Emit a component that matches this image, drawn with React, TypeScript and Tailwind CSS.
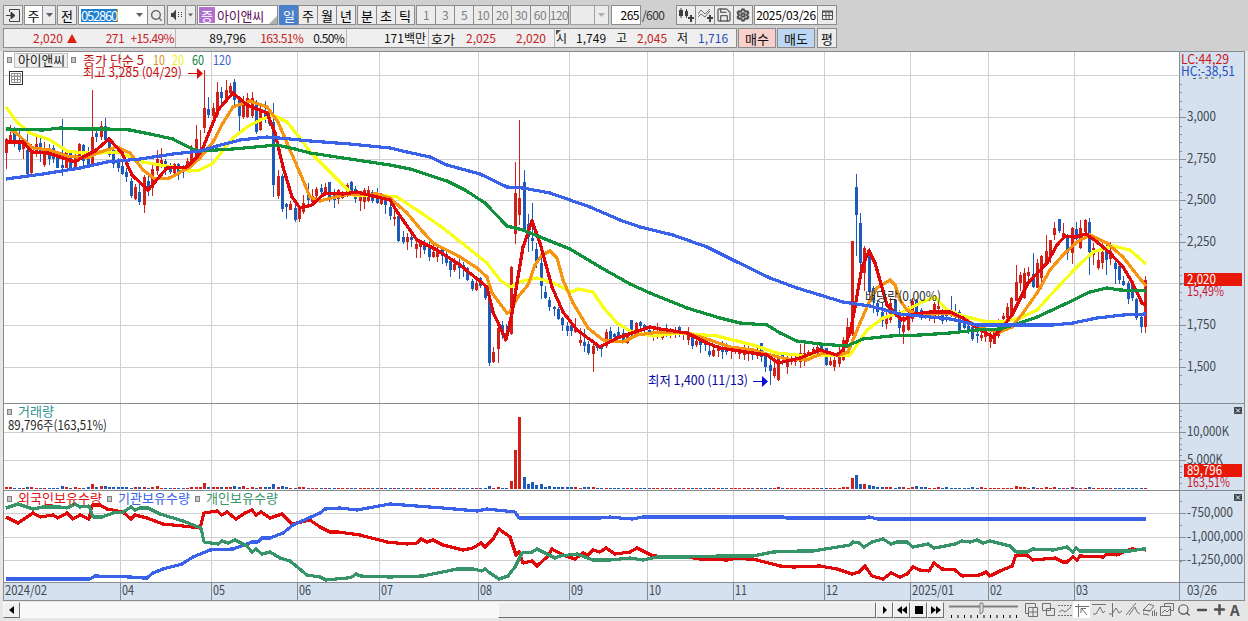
import React from "react";
import { Search, Settings, Save, Plus, Minus } from "lucide-react";

const RED = "#d02018";
const BLUE = "#1c5cb8";

// une bougie par entrée : couleur, haut, ouverture/clôture (haut, bas), bas
const CANDLES = `
r138 139 152 168,r125 135 142 142,b127 130 142 146,b130 141 149 151,r143 144 148 158,b134 150 173 173,r144 150 172 175,r136 144 153 156,b137 143 153 161,r142 149 164 166,
b144 148 158 164,b145 148 158 162,b151 151 167 167,b119 165 167 175,r150 152 167 167,b151 152 168 168,r154 156 166 167,r143 144 159 160,b144 145 160 166,b147 155 166 167,
r90 137 166 166,b129 133 136 141,r121 126 136 139,b118 126 139 141,b139 142 154 156,b147 150 163 167,b158 160 167 171,b160 166 173 174,b168 172 176 181,b178 181 195 197,
r184 187 198 199,b180 192 201 204,r175 177 204 212,b175 181 189 195,r165 169 187 195,r150 159 170 174,r148 160 165 167,b159 161 168 174,b163 168 171 173,r163 164 172 173,
b163 164 172 179,b165 166 168 177,r158 161 168 169,r145 150 166 167,r125 139 155 157,r130 150 154 156,r70 108 127 132,b97 109 114 117,r103 108 115 117,r82 92 114 116,
b87 92 97 105,r80 90 100 102,r83 86 92 97,b79 82 99 104,b96 100 115 132,r96 101 116 118,r93 98 116 117,r92 98 115 117,b100 102 131 133,r105 109 129 130,
b101 112 116 122,b112 114 123 125,b103 122 184 196,r170 176 195 198,b174 176 208 211,b203 204 206 218,r201 204 209 209,b205 208 219 221,r205 209 218 221,r195 203 211 213,
b183 195 199 203,r189 196 201 204,r187 189 195 197,b184 188 191 194,r183 187 193 195,b182 182 199 201,b189 192 199 207,r189 190 198 203,r191 193 197 198,r183 185 194 196,
b181 182 191 193,b186 189 198 202,r193 194 200 210,r188 190 201 208,r186 190 200 201,b190 192 200 202,b188 196 202 203,r193 199 203 204,b194 198 204 213,b203 207 215 219,
r209 217 218 225,b213 216 240 241,b231 237 241 243,r233 237 241 249,b233 237 239 246,r242 244 248 257,r241 243 246 257,b240 242 249 253,b241 246 256 260,r243 252 256 257,
r247 252 256 261,b246 247 255 263,b250 254 262 265,b259 261 269 276,r258 264 269 271,b259 263 267 278,b262 265 267 276,b267 268 279 280,b279 281 288 290,r281 283 289 290,
b277 278 285 287,b284 286 297 299,b299 300 362 365,r347 352 361 362,r325 328 348 362,b321 325 334 338,b324 333 338 340,r266 267 333 334,r162 193 233 243,r120 198 214 224,
b170 182 228 229,b214 224 236 251,b203 238 240 250,b243 249 260 267,b250 263 285 298,b286 292 297 298,b297 300 306 310,b306 307 308 315,b307 309 318 319,b317 318 324 330,
b322 326 330 335,b322 325 330 335,r318 329 331 332,r328 340 342 345,b329 342 345 351,b341 344 352 354,r343 346 353 371,b343 345 347 350,b344 345 348 356,r329 332 345 347,
b327 331 338 341,b333 334 336 342,b327 332 335 338,b327 333 341 342,r334 336 342 343,b320 320 332 337,r322 323 331 333,b321 322 325 329,b324 325 329 332,b327 330 334 334,
r327 331 335 340,r323 333 334 338,r332 333 337 339,b324 331 334 336,r328 331 334 337,r327 331 333 337,b326 327 334 336,r331 332 334 339,r327 334 339 344,b333 334 345 348,
r339 341 344 346,b338 341 344 352,b337 342 344 350,b345 351 354 356,r347 350 355 356,r341 348 350 356,b341 349 351 358,b343 347 351 354,r346 349 350 358,r347 348 350 353,
r348 351 353 358,r343 352 354 359,r342 351 353 360,b348 352 354 359,r345 352 355 358,b343 343 356 361,b353 355 366 371,b357 365 370 384,r362 368 375 377,r356 358 379 380,
b354 354 358 364,r352 358 366 373,r355 358 361 364,r356 359 361 365,r344 353 361 367,r343 353 355 365,r350 352 356 358,r347 349 352 355,r343 347 352 353,b343 345 348 353,
b348 348 364 365,r357 361 364 365,r356 360 366 370,r347 355 363 366,r337 340 359 360,r318 327 341 347,r241 241 333 335,b174 187 214 255,b213 223 262 265,r246 248 272 290,
b248 252 291 292,b286 288 299 312,b300 303 311 315,b303 312 320 326,r310 317 323 328,r298 303 319 322,b299 300 312 316,b310 316 327 333,r313 325 331 343,r306 316 329 330,
r298 301 318 321,b299 300 314 316,b308 310 314 319,b311 313 316 318,r310 313 315 320,r302 304 315 322,r299 306 308 315,b309 311 320 323,b313 314 315 321,b296 310 315 316,
b304 312 316 320,b310 312 329 333,b321 323 327 328,b324 326 329 333,b326 327 338 340,b332 334 335 342,r331 335 337 340,r332 333 336 341,r330 336 341 347,r330 332 343 343,
r319 321 335 337,r313 316 318 328,r303 307 317 319,r297 298 314 318,r265 282 300 300,r272 275 282 290,r268 273 297 298,r267 272 275 284,b253 274 286 287,r259 263 287 287,
r255 256 277 288,r235 251 262 265,r240 240 256 262,r222 228 234 239,b219 219 230 232,r223 233 235 238,b234 235 252 259,r227 228 252 263,b222 229 238 244,r220 228 247 248,
r219 220 231 232,b218 222 251 274,r243 248 254 264,r250 260 267 269,r243 252 262 268,b242 249 259 274,r242 251 258 264,b261 263 268 283,b265 266 279 283,b276 281 284 285,
b281 283 298 303,b281 283 297 300,b298 299 317 319,b316 317 326 332,r276 280 326 332`
  .trim()
  .split(",")
  .map((s) => {
    const t = s.trim();
    const [high, top, bottom, low] = t.slice(1).split(" ").map(Number);
    return { color: t[0] === "r" ? RED : BLUE, high, top, bottom, low };
  });

const xOf = (i: number) => Math.floor(6.1 + i * 4.316);

// hauteurs des barres de volume qui dépassent du fond
const VOLUMES: Record<number, number> = {
  0: 2, 1: 2, 5: 2, 6: 2, 13: 3, 14: 2, 16: 2, 19: 2, 20: 5, 21: 2, 22: 3, 23: 3, 24: 2, 25: 2, 26: 2, 27: 2, 28: 2,
  30: 2, 31: 2, 32: 2, 34: 2, 35: 3, 43: 2, 44: 2, 45: 2, 46: 6, 47: 2, 48: 2, 49: 2, 50: 2, 51: 2, 52: 2, 53: 3,
  54: 2, 55: 3, 57: 2, 59: 2, 60: 2, 61: 2, 62: 5, 63: 2, 64: 3, 65: 2, 68: 2, 69: 2, 112: 3, 114: 2, 117: 8, 118: 39,
  119: 72, 120: 12, 121: 5, 122: 7, 123: 4, 124: 5, 125: 2, 126: 3, 127: 2, 128: 2, 129: 2, 130: 2, 131: 2, 132: 2,
  134: 2, 135: 2, 136: 2, 179: 2, 194: 2, 195: 2, 196: 11, 197: 14, 198: 5, 199: 5, 200: 4, 201: 3, 202: 2, 203: 2,
  204: 2, 205: 2, 207: 2, 208: 2, 210: 2, 211: 3, 212: 2, 213: 2, 216: 2, 218: 2, 224: 2, 226: 2, 234: 3, 235: 2,
  236: 2, 238: 2, 241: 2, 243: 2, 247: 2, 251: 2,
};

const MA = [
  {
    color: "#f6ff14",
    points:
      "6,107 17,122 30,133 50,140 67,151 83,153 100,153 117,152 130,157 143,162 160,165 180,168 190,171 200,170 213,163 233,138 247,127 260,120 273,115 287,122 300,138 311,153 353,195 377,195 397,197 420,212 443,228 467,247 487,263 500,280 510,287 523,281 537,278 553,283 572,292 578,289 593,292 603,307 617,323 630,331 637,333 653,336 680,333 717,336 753,345 777,353 807,356 823,355 850,355 857,345 867,330 883,318 903,312 920,303 935,297 947,310 963,316 983,321 1003,322 1020,318 1037,310 1057,288 1077,267 1093,252 1113,246 1130,250 1146,264",
  },
  {
    color: "#f79410",
    points:
      "6,128 15,132 27,143 33,148 50,150 67,156 87,158 100,152 117,147 130,153 143,170 155,179 170,178 190,167 200,158 213,142 223,123 233,107 250,101 267,107 278,122 290,150 300,173 310,197 320,201 343,195 377,194 390,198 407,213 423,232 433,243 460,257 477,268 487,277 492,293 507,313 510,312 518,297 528,285 535,265 542,255 550,251 557,258 563,280 573,303 588,328 603,340 623,342 637,335 660,332 687,333 710,340 730,347 753,350 770,355 787,359 807,360 823,353 840,355 848,352 860,323 870,300 877,288 890,280 895,285 900,300 907,310 920,315 947,313 963,318 980,328 1000,332 1012,327 1023,313 1037,293 1050,270 1063,255 1077,242 1090,235 1107,243 1123,257 1137,275 1146,286",
  },
  {
    color: "#e00808",
    points:
      "6,142 23,142 32,152 48,153 63,158 75,162 83,157 95,151 109,139 122,153 132,175 148,190 167,168 187,167 197,157 202,150 213,123 218,110 233,93 247,105 267,113 275,133 283,167 292,197 300,208 312,205 325,193 343,194 357,192 377,197 390,200 398,213 417,240 437,250 460,265 487,287 493,312 506,340 512,313 523,247 532,221 540,243 552,287 563,312 577,330 600,347 617,338 632,333 650,327 660,329 687,333 707,343 720,348 753,353 767,355 778,363 800,358 820,350 837,355 843,350 850,333 855,307 862,267 869,251 875,263 887,305 902,320 915,314 930,312 950,312 963,318 977,328 993,337 1000,330 1012,315 1028,283 1047,263 1057,245 1065,236 1075,237 1086,234 1097,242 1110,253 1123,267 1132,282 1142,303 1146,305",
  },
  {
    color: "#12913c",
    points:
      "6,129 43,130 60,128 80,129 107,129 130,130 150,134 173,139 192,149 200,151 233,149 277,145 295,149 310,153 330,156 363,161 390,165 410,169 447,181 465,190 485,203 507,226 523,230 540,237 570,249 600,267 630,284 650,293 687,308 720,318 740,323 767,325 780,333 797,341 820,344 847,346 863,339 890,336 920,335 950,333 977,330 1000,329 1017,324 1037,317 1063,305 1090,292 1107,288 1120,290 1146,291",
  },
  {
    color: "#3a62e8",
    points:
      "6,179 43,174 80,168 107,162 140,159 173,154 200,151 217,146 240,140 267,137 290,139 310,141 350,144 390,148 407,152 430,157 447,165 480,174 507,187 523,188 550,193 590,207 620,220 640,227 673,235 707,247 737,262 770,278 797,288 843,302 870,306 900,314 930,317 950,319 977,325 1003,325 1030,325 1053,325 1073,323 1097,318 1123,315 1146,314",
  },
];

const HOLDINGS = [
  {
    color: "#e00808",
    points:
      "6,517 18,523 33,513 40,517 53,515 58,518 67,513 73,519 80,515 89,519 92,505 100,505 107,509 123,512 131,519 135,515 147,518 163,524 183,526 200,528 204,513 217,511 222,515 227,512 236,519 245,513 252,510 256,515 261,512 270,518 282,514 292,524 310,520 320,527 330,532 338,532 360,535 387,542 407,544 417,543 421,539 427,542 433,540 443,545 463,550 473,548 481,543 485,547 493,539 499,529 510,537 516,555 519,552 523,563 532,561 537,566 547,557 552,549 563,555 575,559 583,553 588,555 593,550 600,552 606,548 615,554 630,552 637,548 653,556 687,557 700,559 727,560 737,558 757,560 780,566 793,567 820,566 837,569 852,574 859,572 865,566 872,576 883,579 891,573 900,577 907,574 913,567 920,570 929,571 934,563 942,569 955,570 962,576 980,575 986,572 990,576 1000,571 1012,566 1016,555 1027,555 1033,560 1055,558 1063,562 1067,562 1073,557 1077,560 1080,556 1103,557 1107,554 1117,555 1123,552 1132,549 1146,550",
  },
  {
    color: "#3a62e8",
    points:
      "6,579 90,579 95,576 130,577 143,578 147,578 153,573 163,569 182,564 193,557 210,550 233,549 252,542 258,542 262,538 270,538 283,533 293,525 320,513 325,509 340,508 357,510 390,504 443,508 477,511 487,509 515,512 519,518 600,518 610,517 620,518 632,519 643,517 783,517 787,518 865,518 869,517 878,519 1146,519",
  },
  {
    color: "#379468",
    points:
      "6,508 18,504 33,509 43,507 60,507 67,508 75,504 80,507 89,506 93,517 102,517 113,513 123,512 131,507 135,510 140,508 148,508 160,514 183,521 201,528 204,542 218,544 222,541 228,543 235,540 247,546 252,552 256,549 262,554 270,552 280,558 290,561 307,575 320,577 326,580 347,578 352,577 356,574 360,576 390,577 423,576 457,569 473,569 482,571 485,569 490,573 499,579 508,576 515,567 522,553 532,552 537,549 547,554 555,558 560,556 577,554 593,560 610,560 630,558 643,560 657,557 687,557 720,556 753,556 773,552 800,551 813,551 850,545 853,542 859,543 864,547 872,542 883,539 891,544 897,542 907,542 913,547 928,544 934,548 940,547 955,544 962,541 970,542 977,540 983,543 990,541 1010,546 1016,552 1027,552 1033,549 1053,550 1067,547 1073,552 1076,548 1080,551 1130,551 1143,549 1146,549",
  },
];

const MONTHS: [number, string, number][] = [
  [120, "04", 12], [211, "05", 12], [297, "06", 12], [379, "07", 12], [478, "08", 12], [569, "09", 12],
  [647, "10", 12], [733, "11", 12], [824, "12", 12], [910, "2025/01", 42], [988, "02", 12], [1074, "03", 12],
];

const GRID_Y = [75, 117, 159, 200, 242, 283, 325, 367, 432, 460, 513, 537, 560];

interface LabelProps {
  x: number;
  y: number;
  w: number;
  color?: string;
  children: string;
}

function Label({ x, y, w, color = "#404850", children }: LabelProps) {
  return (
    <text x={x} y={y} textLength={w} lengthAdjust="spacingAndGlyphs" fill={color} className="text-[13px]">
      {children}
    </text>
  );
}

function Bullet({ x, y }: { x: number; y: number }) {
  return <rect x={x + 0.5} y={y + 0.5} width="4" height="5" fill="#c8c8c8" stroke="#808080" />;
}

function CloseBox({ y }: { y: number }) {
  return (
    <g>
      <rect x="1234" y={y} width="8" height="7" fill="#404850" />
      <path d={`M1236 ${y + 1.5}l4 4m0-4l-4 4`} stroke="#fff" />
    </g>
  );
}

function Chart() {
  return (
    <svg width="1242" height="550" viewBox="3 51 1242 550" className="block shrink-0 font-normal">
      <rect x="3" y="51" width="1242" height="550" fill="#fff" />
      <rect x="1180" y="51" width="65" height="550" fill="#d6e1ef" />
      <rect x="3" y="583" width="1242" height="17" fill="#d6e1ef" />
      <g shapeRendering="crispEdges">
        {GRID_Y.map((y) => (
          <rect key={y} x="4" y={y} width="1175" height="1" fill="#d0d0d0" />
        ))}
        {MONTHS.map(([x]) => (
          <g key={x}>
            <rect x={x} y="52" width="1" height="530" fill="#d0d0d0" />
            <rect x={x} y="583" width="1" height="17" fill="#808890" />
          </g>
        ))}
        {CANDLES.map((c, i) => (
          <g key={i} fill={c.color}>
            <rect x={xOf(i)} y={c.high} width="1" height={c.low - c.high + 1} />
            <rect x={xOf(i) - 1} y={c.top} width="3" height={c.bottom - c.top + 1} />
            <rect x={xOf(i) - 1} y={489 - (VOLUMES[i] || 1)} width="3" height={VOLUMES[i] || 1} />
          </g>
        ))}
        <path d="M899 317h9l-4 6z" fill="#e00808" />
        {MA.map((l) => (
          <polyline key={l.color} points={l.points} fill="none" stroke={l.color} strokeWidth="3.2" strokeLinejoin="round" />
        ))}
        {HOLDINGS.map((l) => (
          <polyline key={l.color} points={l.points} fill="none" stroke={l.color} strokeWidth="3.2" strokeLinejoin="round" />
        ))}
        {/* cadres des trois panneaux */}
        {[51, 403, 490, 582, 600].map((y) => (
          <rect key={y} x="3" y={y} width="1242" height="1" fill="#888c90" />
        ))}
        {[3, 1179, 1244].map((x) => (
          <rect key={x} x={x} y="51" width="1" height="550" fill="#888c90" />
        ))}
        {/* graduations */}
        {Array.from({ length: 37 }, (_, i) => (
          <rect key={i} x="1180" y={Math.round(84 + i * 8.32)} width="2" height="1" fill="#888c90" />
        ))}
        {Array.from({ length: 14 }, (_, i) => (
          <rect key={i} x="1180" y={Math.round(410 + i * 5.6)} width="2" height="1" fill="#888c90" />
        ))}
        {Array.from({ length: 6 }, (_, i) => (
          <rect key={i} x="1180" y={501 + i * 12} width="2" height="1" fill="#888c90" />
        ))}
        {GRID_Y.slice(1).map((y) => (
          <rect key={y} x="1180" y={y} width="6" height="1" fill="#888c90" />
        ))}
      </g>

      {["3,000", "2,750", "2,500", "2,250", "", "1,750", "1,500"].map(
        (t, i) => t && <Label key={t} x={1187} y={121 + i * 41.6} w={29}>{t}</Label>
      )}
      <path d="M1193 78.500h3m3-.5h3m3 0h3m3 0h3" stroke="#505860" />
      <Label x={1181} y={64} w={48} color="#c81818">LC:44,29</Label>
      <Label x={1181} y={76} w={54} color="#2050c0">HC:-38,51</Label>
      <rect x="1184" y="273" width="58" height="13" fill="#e81808" />
      <Label x={1187} y={284} w={29} color="#fff">2,020</Label>
      <Label x={1187} y={296} w={37} color="#c81830">15,49%</Label>
      <Label x={1187} y={436} w={42}>10,000K</Label>
      <Label x={1187} y={464} w={36}>5,000K</Label>
      <rect x="1184" y="464" width="58" height="13" fill="#e81808" />
      <Label x={1187} y={475} w={35} color="#fff">89,796</Label>
      <Label x={1187} y={487} w={43} color="#c81830">163,51%</Label>
      <Label x={1187} y={517} w={46}>-750,000</Label>
      <Label x={1187} y={541} w={56}>-1,000,000</Label>
      <Label x={1187} y={564} w={56}>-1,250,000</Label>
      <CloseBox y={407} />
      <CloseBox y={494} />

      <Label x={5} y={595} w={42}>2024/02</Label>
      {MONTHS.map(([x, t, w]) => (
        <Label key={x} x={x + 2} y={595} w={w}>{t}</Label>
      ))}
      <Label x={1187} y={595} w={30}>03/26</Label>

      <Bullet x={7} y={57} />
      <rect x="14.5" y="53.5" width="53" height="14" fill="#eee" stroke="#c0c0c0" />
      <Label x={18} y={65} w={47} color="#202020">아이앤씨</Label>
      <Bullet x={71} y={57} />
      <Label x={83} y={65} w={61} color="#c01010">종가 단순 5</Label>
      <Label x={153} y={65} w={12} color="#e09020">10</Label>
      <Label x={172} y={65} w={12} color="#f0f020">20</Label>
      <Label x={192} y={65} w={12} color="#108040">60</Label>
      <Label x={213} y={65} w={18} color="#3860c8">120</Label>
      <Label x={83} y={77} w={99} color="#c81010">최고 3,285 (04/29)</Label>
      <path d="M188 73.5h10" stroke="#e00808" />
      <path d="M197 68l6 5.5-6 5.5z" fill="#e00808" />
      <g fill="none" stroke="#303030">
        <rect x="9.5" y="71.5" width="13" height="13" />
        <path d="M11.5 73.500h9v9h-9zm0 3h9m-9 3h9m-6-6v9m3-9v9" stroke="#909090" />
      </g>
      <Label x={648} y={385} w={100} color="#0808a0">최저 1,400 (11/13)</Label>
      <path d="M753 381.500h9" stroke="#0808d0" />
      <path d="M762 376l6 5.500-6 5.500z" fill="#0808e0" />
      <Label x={865} y={301} w={76} color="#303030">배당락(0,00%)</Label>

      <Bullet x={7} y={409} />
      <Label x={18} y={416} w={36} color="#309090">거래량</Label>
      <Label x={8} y={430} w={99} color="#282828">89,796주(163,51%)</Label>
      <Bullet x={7} y={496} />
      <Label x={18} y={503} w={84} color="#e01010">외국인보유수량</Label>
      <Bullet x={107} y={496} />
      <Label x={118} y={503} w={72} color="#3a62e8">기관보유수량</Label>
      <Bullet x={195} y={496} />
      <Label x={206} y={503} w={72} color="#379468">개인보유수량</Label>
    </svg>
  );
}

interface CellProps {
  className?: string;
  bg?: string;
  border?: string;
  children?: React.ReactNode;
}

function Cell({ className = "", bg = "bg-[#ececec]", border = "border-[#8c8c8c]", children }: CellProps) {
  return (
    <div className={`h-5 shrink-0 border flex items-center justify-center text-[13px] leading-none ${bg} ${border} ${className}`}>
      {children}
    </div>
  );
}

function Arrow({ className = "text-[#606060]" }: { className?: string }) {
  return (
    <svg width="7" height="4" viewBox="0 0 7 4" className={`shrink-0 ${className}`}>
      <path d="M0 0h7L3.500 4z" fill="currentColor" />
    </svg>
  );
}

function Toolbar() {
  return (
    <div className="flex items-center h-5 pl-[3px]">
      <Cell className="w-5 mr-px">
        <svg width="14" height="13" fill="none" stroke="#404040">
          <path d="M3.500 3V.5h10v12h-10V10" />
          <path d="M0 6.500h5" />
          <path d="M5 3l4 3.500L5 10z" fill="#303030" />
        </svg>
      </Cell>
      <Cell bg="bg-white" className="w-[18px] border-r-0">주</Cell>
      <Cell className="w-[14px] mr-px"><Arrow /></Cell>
      <Cell className="w-5 mr-px">전</Cell>
      <Cell bg="bg-white" className="w-[54px] border-r-0 !justify-start pl-[2px]">
        <span className="bg-[#1c80d0] text-white text-[13px] leading-[13px] w-[37px] border-r border-orange-400">
          <span className="block w-[36px] tracking-[-1.200px]">052860</span>
        </span>
      </Cell>
      <Cell bg="bg-white" className="w-4 border-l-0"><Arrow /></Cell>
      <Cell className="w-[18px] mr-[2px] -ml-px"><Search size={13} color="#606060" strokeWidth={2.5} /></Cell>
      <Cell className="w-[18px] border-r-0">
        <svg width="13" height="12">
          <path d="M1 4h2l3-3.500v11L3 8H1z" fill="#404040" />
          <path d="M8 3h1v1H8zM8 5h1v1H8zM8 7h1v1H8zM11 3h1v1h-1zM11 5h1v1h-1zM11 7h1v1h-1z" fill="#404040" />
        </svg>
      </Cell>
      <Cell className="w-[11px] mr-px"><Arrow className="text-[#606060] w-[5px]" /></Cell>
      <Cell bg="bg-white" className="relative w-[81px] mr-px !justify-start">
        <span className="bg-[#b070cc] text-white w-4 h-4 ml-px flex items-center justify-center shrink-0">증</span>
        <span className="text-[#601058] text-[13px] ml-[2px] tracking-[-0.200px]">아이앤씨</span>
        <svg width="8" height="8" className="absolute right-0 bottom-0"><path d="M8 0v8H0z" fill="#b0b0b0" /></svg>
      </Cell>
      <Cell bg="bg-[#4a80c8]" border="border-[#4a80c8]" className="w-5 text-white">일</Cell>
      {["주", "월", "년"].map((t) => (
        <Cell key={t} className="w-5 -ml-px">{t}</Cell>
      ))}
      <div className="w-px" />
      {["분", "초", "틱"].map((t) => (
        <Cell key={t} className="w-5 -mr-px">{t}</Cell>
      ))}
      <div className="w-[2px]" />
      {["1", "3", "5", "10", "20", "30", "60", "120"].map((t) => (
        <Cell key={t} className="w-5 -mr-px text-[#808080] !text-[12px]">
          <span className="tracking-[-0.500px]">{t}</span>
        </Cell>
      ))}
      <Cell border="border-[#a0a0a0]" className="w-[25px] ml-[2px]" />
      <Cell border="border-[#a0a0a0]" className="w-[15px] -ml-px mr-[2px]"><Arrow className="text-[#b0b0b0]" /></Cell>
      <Cell bg="bg-white" className="w-[30px] !text-[12px] !justify-end pr-px">
        <span className="tracking-[-0.500px]">265</span>
      </Cell>
      <span className="w-[35px] text-[12px] leading-none pl-px tracking-[-0.600px] text-[#303030] shrink-0">/600</span>
      <Cell className="w-5 -mr-px">
        <svg width="15" height="14" fill="#404040">
          <path d="M0 2h4v6H0zM1.500 0h1v10h-1zM6 3h3v5H6zM7 1h1v9H7zM9 9h2V7h2v2h2v2h-2v3h-2v-3H9z" />
        </svg>
      </Cell>
      <Cell className="w-5 -mr-px">
        <svg width="15" height="14" fill="none" stroke="#707070">
          <path d="M0 6l3-4 4 4 5-5M0 9l3-3 4 3 5-6" />
          <path d="M9 9h2V7h2v2h2v2h-2v3h-2v-3H9z" fill="#404040" stroke="none" />
        </svg>
      </Cell>
      <Cell className="w-5 -mr-px"><Save size={16} color="#606060" strokeWidth={2} /></Cell>
      <Cell className="w-5 mr-px">
        <Settings size={14} color="#505050" strokeWidth={3.5} />
      </Cell>
      <Cell bg="bg-white" className="w-[64px] !text-[12px]">
        <span className="tracking-[-0.300px]">2025/03/26</span>
      </Cell>
      <Cell className="w-5 -ml-px">
        <svg width="11" height="10" fill="none" stroke="#505050">
          <path d="M.5 1.500h10v8H.5zm0 4h10M4 2.500v7m3-7v7" />
          <path d="M0 1.500h11" strokeWidth="2" />
        </svg>
      </Cell>
    </div>
  );
}

function QuoteBar() {
  return (
    <div className="flex items-center h-5 pl-[3px] mt-[3px] text-[12px] leading-none text-[#101010]">
      <div className="h-5 w-[734px] shrink-0 border border-[#8c8c8c] bg-[#efefef] flex items-center whitespace-nowrap">
        <div className="w-[172px] h-full flex items-center border-r border-[#b8b8b8] text-[#c82020]">
          <span className="w-[59px] text-right">2,020</span>
          <svg width="10" height="9" className="ml-[4px]"><path d="M5 0l5 9H0z" fill="#e02010" /></svg>
          <span className="w-[47px] text-right tracking-[-0.600px]">271</span>
          <span className="flex-1 text-right pr-px tracking-[-0.600px]">+15.49%</span>
        </div>
        <div className="w-[171px] h-full flex items-center border-r border-[#b8b8b8]">
          <span className="w-[70px] text-right">89,796</span>
          <span className="w-[57px] text-right text-[#c82020] tracking-[-0.700px]">163.51%</span>
          <span className="flex-1 text-right pr-[2px] tracking-[-0.700px]">0.50%</span>
        </div>
        <div className="w-[82px] h-full flex items-center justify-end border-r border-[#b8b8b8] pr-[2px]">171백만</div>
        <div className="w-[126px] h-full flex items-center border-r border-[#b8b8b8]">
          <span className="pl-[2px] text-[13px]">호가</span>
          <span className="flex-1 text-right text-[#c82020]">2,025</span>
          <span className="w-[50px] text-right text-[#c82020] mr-[8px]">2,020</span>
        </div>
        <div className="relative flex-1 h-full flex items-center">
          <svg width="5" height="5" className="absolute left-px top-px"><path d="M0 0h5L0 5z" fill="#505050" /></svg>
          <span className="pl-px text-[12px]">시</span>
          <span className="w-[39px] text-right">1,749</span>
          <span className="w-[21px] text-right text-[12px]">고</span>
          <span className="w-[40px] text-right text-[#c82020]">2,045</span>
          <span className="w-[21px] text-right text-[12px]">저</span>
          <span className="w-[40px] text-right text-[#2848b0]">1,716</span>
        </div>
      </div>
      <Cell bg="bg-[#f8d0cc]" className="w-[38px] ml-px">매수</Cell>
      <Cell bg="bg-[#bcd8f4]" className="w-[38px] ml-px">매도</Cell>
      <Cell className="w-5 ml-[2px]">평</Cell>
    </div>
  );
}

function ScrollButton({ d }: { d: string }) {
  return (
    <div className="w-[17px] h-4 shrink-0 bg-[#f0f0f0] border border-[#fafafa] border-r-[#707070] border-b-[#707070] flex items-center justify-center">
      <svg width="10" height="8"><path d={d} fill="#000" /></svg>
    </div>
  );
}

// icônes de dessin, une grille de 14x14 par icône
const TOOLS = [
  "M5 10.500H1.500v-10h10v4M4.500 4.500h9v9h-9zM9 5v8M5 9h8",
  "M1.500.5h8v7h-8zM5.500 5.500h8v7h-8z",
  "M0 2.500h2m1 0h2m1 0h2m1 0h2m1 0h2M0 12.500h2m1 0h2m1 0h2m1 0h2m1 0h2M1 9l3-2 3 2 6-5",
  "M0 3.500h14M3.500 1v13M6 5l6 7M6 10V5.500h5",
  "M0 1.500h14M1 11h3l4-7 3 6 2-2",
  "M3.500 0v14M0 11h3l4-6 3 5 3-2",
  "M0 12L10 0M3 12l6-8 2 5 3 2",
  "M0 7l6-6 5 2-4 5zM0 7v4l6 1M0 7l7 1M9.500 13V8M11.500 13V7M13.500 13V9",
  "M4.500 3V.5h9v7h-3M.5 3.500h10v9H.5zM2 10l3-3 2 2 3-3",
];

function BottomBar() {
  return (
    <div className="flex items-center h-[17px] pl-[3px]">
      <ScrollButton d="M7 0v8L2 4z" />
      <div className="w-[478px] h-4 bg-[#f8f8f8] shrink-0" />
      <div className="w-[378px] h-4 shrink-0 bg-[#eee] border border-[#fafafa] border-r-[#707070] border-b-[#707070]" />
      <ScrollButton d="M3 0v8l4-4z" />
      <ScrollButton d="M5 0v8L0 4zM10 0v8L5 4z" />
      <ScrollButton d="M1 0h8v8H1z" />
      <ScrollButton d="M0 0v8l5-4zM5 0v8l5-4z" />
      <svg width="70" height="18" className="ml-[5px] mr-[3px] shrink-0">
        <path d="M0 5.500h69" stroke="#808080" strokeWidth="2" />
        <path d="M34 2v9l-3 2V2z" fill="#e0e0e0" stroke="#808080" />
        <path d="M2.500 14v3m6.500-3v3m6.500-3v3m6.500-3v3m6.500-3v3m6.500-3v3m6.500-3v3m6.500-3v3m6.500-3v3m6.500-3v3m6.500-3v3" stroke="#000" />
      </svg>
      {TOOLS.map((d, i) => (
        <div key={i} className={`w-[17px] h-[17px] shrink-0 flex items-center justify-center ${i === 3 ? "bg-white" : ""}`}>
          <svg width="14" height="14" fill="none" stroke="#707070"><path d={d} /></svg>
        </div>
      ))}
      <Search size={14} color="#505050" className="shrink-0 ml-[2px]" />
      <Minus size={14} color="#505050" strokeWidth={4} className="shrink-0 ml-1" />
      <Plus size={15} color="#505050" strokeWidth={4} className="shrink-0 ml-[3px]" />
      <span className="text-[15px] font-bold leading-none text-[#505050] ml-[3px]">A</span>
    </div>
  );
}

function App() {
  return (
    <div className="w-[1248px] h-[621px] overflow-hidden bg-[#e6e6e6] font-['Noto_Sans_CJK_KR',sans-serif]">
      <div className="h-[51px] bg-[#d0d0d0] pt-[5px]">
        <Toolbar />
        <QuoteBar />
      </div>
      <div className="pl-[3px]">
        <Chart />
      </div>
      <BottomBar />
    </div>
  );
}

export default App;
